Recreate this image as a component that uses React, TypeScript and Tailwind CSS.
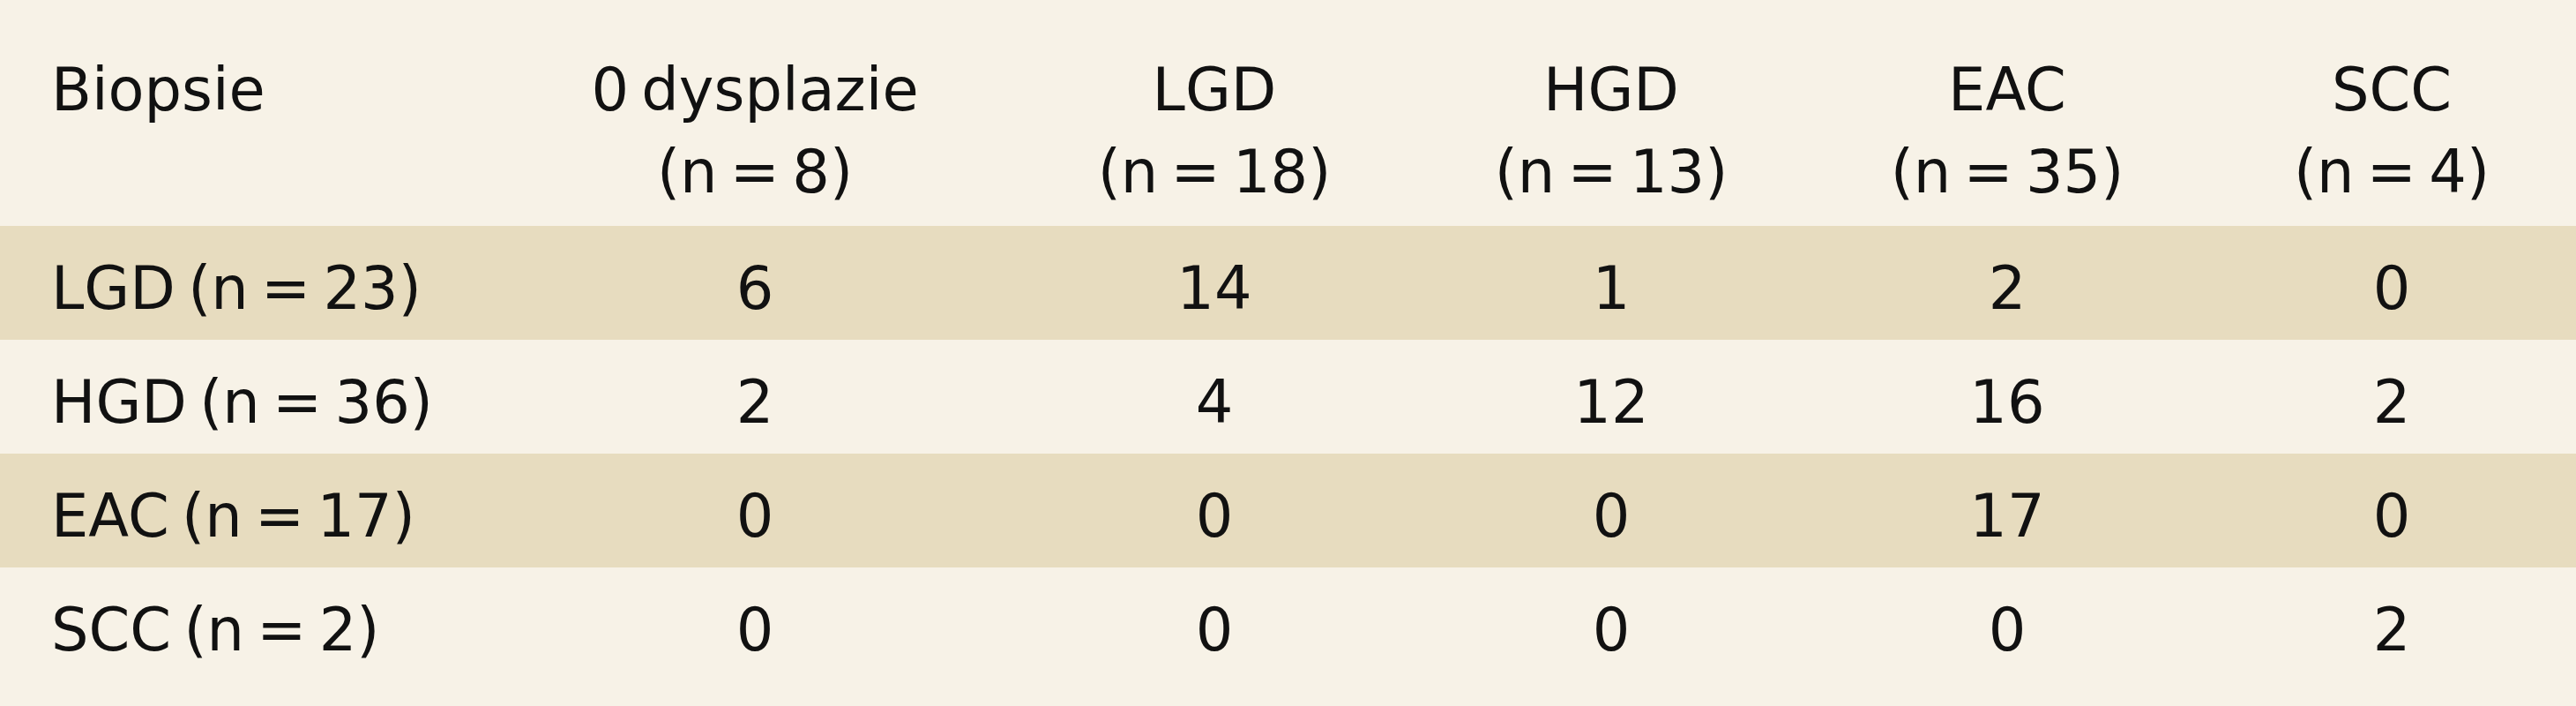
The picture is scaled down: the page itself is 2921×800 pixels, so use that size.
import React from "react";

const header = [
  ["0 dysplazie", "(n = 8)"],
  ["LGD", "(n = 18)"],
  ["HGD", "(n = 13)"],
  ["EAC", "(n = 35)"],
  ["SCC", "(n = 4)"],
];

const rows: { label: string; values: string[]; shaded: boolean }[] = [
  { label: "LGD (n = 23)", values: ["6", "14", "1", "2", "0"], shaded: true },
  { label: "HGD (n = 36)", values: ["2", "4", "12", "16", "2"], shaded: false },
  { label: "EAC (n = 17)", values: ["0", "0", "0", "17", "0"], shaded: true },
  { label: "SCC (n = 2)", values: ["0", "0", "0", "0", "2"], shaded: false },
];

const grid =
  "grid grid-cols-[563px_586px_456px_444px_454px_418px]";

export default function App() {
  return (
    <div
      className="w-[2921px] h-[800px] bg-[#f7f2e7] text-[#111111] text-[67px] [word-spacing:-7px] pb-[28px]"
      style={{ fontFamily: '"DejaVu Sans", "Noto Sans", sans-serif' }}
    >
      <div className={`${grid} h-[256px] pt-[56px] leading-[93px]`}>
        <div className="pl-[58px]">Biopsie</div>
        {header.map(([a, b]) => (
          <div key={a} className="flex flex-col items-center">
            <span>{a}</span>
            <span>{b}</span>
          </div>
        ))}
      </div>
      {rows.map((r) => (
        <div
          key={r.label}
          className={`${grid} h-[129px] pt-[14px] leading-[115px] ${
            r.shaded ? "bg-[#e7dcbf]" : ""
          }`}
        >
          <div className="pl-[58px] whitespace-nowrap">{r.label}</div>
          {r.values.map((v, i) => (
            <div key={i} className="text-center">
              {v}
            </div>
          ))}
        </div>
      ))}
    </div>
  );
}
